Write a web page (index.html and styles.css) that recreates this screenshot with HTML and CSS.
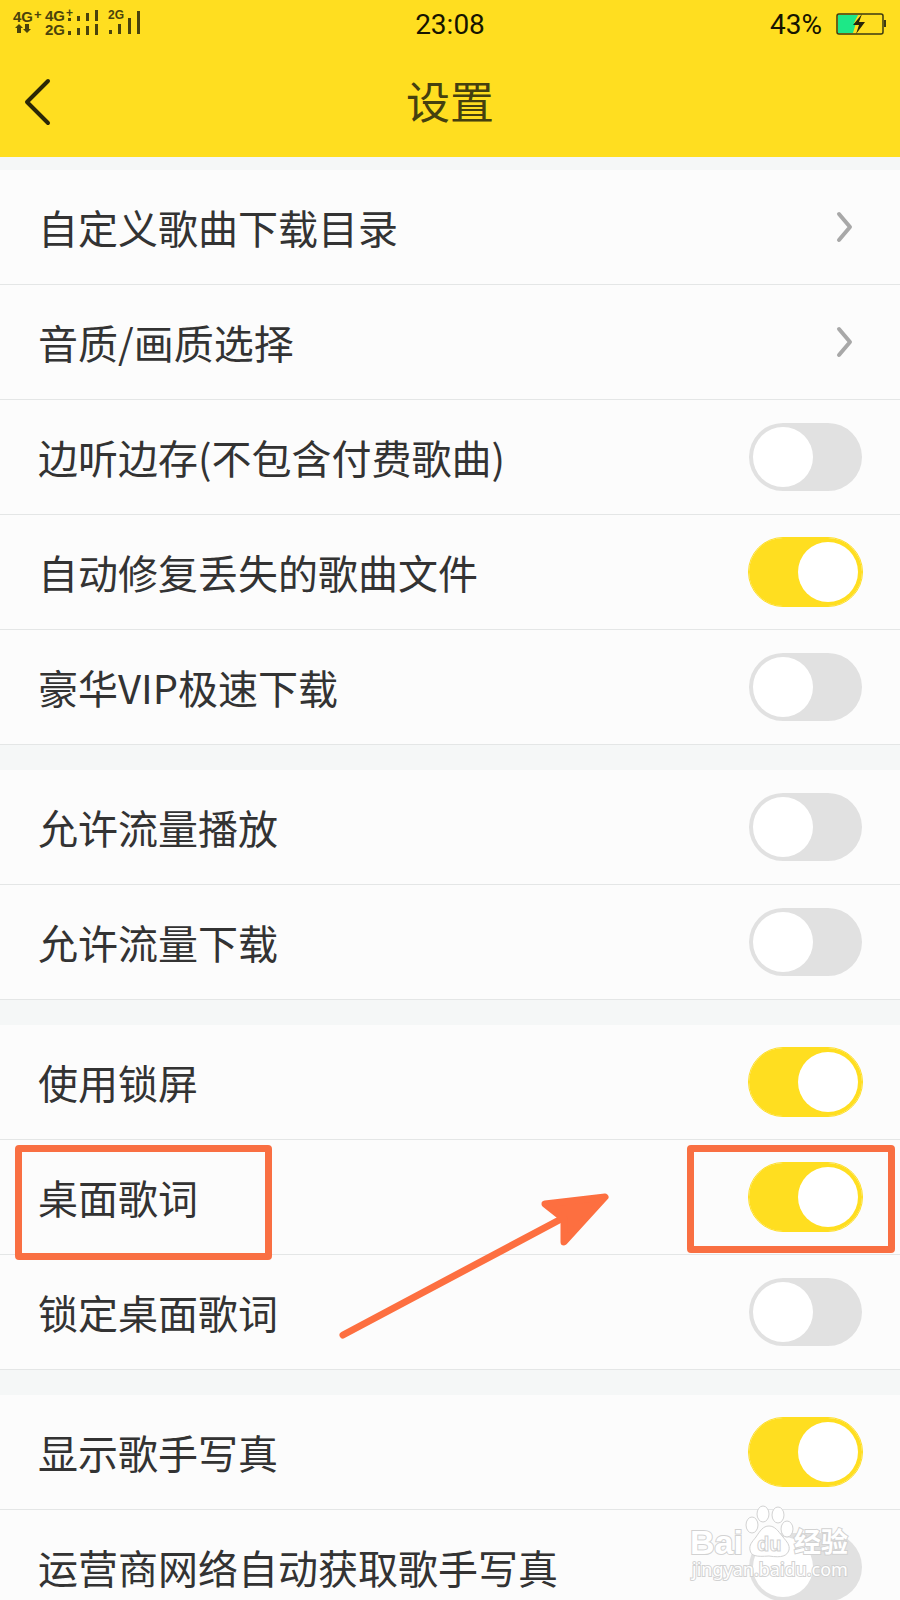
FILE: index.html
```
<!DOCTYPE html>
<html lang="zh-CN">
<head>
    <meta charset="UTF-8">
    <meta name="viewport" content="width=device-width, initial-scale=1.0">
    <title>设置</title>
    <link rel="stylesheet" href="styles.css">
</head>
<body>
    <div class="screen">
        <!-- 顶部：状态栏 + 标题栏 -->
        <header class="header">
            <div class="status-bar">
                <svg class="signal" viewBox="0 0 144 40" role="img" aria-label="信号">
                    <g class="signal-text">
                        <text x="13" y="22" font-size="15">4G</text>
                        <text x="34" y="19" font-size="13">+</text>
                        <text x="45" y="21" font-size="15">4G</text>
                        <text x="66" y="17" font-size="12">+</text>
                        <text x="45" y="35" font-size="15">2G</text>
                        <text x="108" y="19" font-size="12">2G</text>
                    </g>
                    <path d="M17 33v-5h-2l4-4 4 4h-2v5z M25 24v5h-2l4 4 4-4h-2v-5z"/>
                    <path d="M68 18h3v3h-3z M77 16h3v5h-3z M86 13h3v8h-3z M95 10h3v11h-3z"/>
                    <path d="M68 31h3v4h-3z M77 28h3v7h-3z M86 26h3v9h-3z M95 24h3v11h-3z"/>
                    <path d="M109 30h3v4h-3z M118 24h3v10h-3z M128 18h3v16h-3z M137 11h3v23h-3z"/>
                </svg>
                <span class="time">23:08</span>
                <div class="battery">
                    <span>43%</span>
                    <svg width="50" height="24" viewBox="0 0 50 24" aria-hidden="true">
                        <path d="M2 3h20l-4 8h2l-3 10H2z" fill="#1de887"/>
                        <rect x="1" y="2" width="46" height="20" rx="2" fill="none" stroke="#3d3a12" stroke-width="1.500"/>
                        <rect x="48" y="8" width="2" height="7" fill="#3d3a12"/>
                        <path d="M26 2L17 13h6l-3 9 9-12h-6z" fill="#28250a"/>
                    </svg>
                </div>
            </div>
            <div class="title-bar">
                <button class="back" type="button" aria-label="返回">
                    <svg width="30" height="50" viewBox="0 0 30 50" aria-hidden="true">
                        <path d="M24 4L3 25L24 46"/>
                    </svg>
                </button>
                <h1 class="title">设置</h1>
            </div>
        </header>

        <!-- 设置列表 -->
        <main class="list">
            <section class="group">
                <a class="row" href="#">
                    <span>自定义歌曲下载目录</span>
                    <svg class="arrow" width="20" height="32" viewBox="0 0 20 32" aria-hidden="true"><path d="M4 3L15 16L4 29"/></svg>
                </a>
                <a class="row" href="#">
                    <span>音质/画质选择</span>
                    <svg class="arrow" width="20" height="32" viewBox="0 0 20 32" aria-hidden="true"><path d="M4 3L15 16L4 29"/></svg>
                </a>
                <label class="row">
                    <span>边听边存(不包含付费歌曲)</span>
                    <input class="switch" type="checkbox">
                </label>
                <label class="row">
                    <span>自动修复丢失的歌曲文件</span>
                    <input class="switch" type="checkbox" checked>
                </label>
                <label class="row">
                    <span>豪华VIP极速下载</span>
                    <input class="switch" type="checkbox">
                </label>
            </section>

            <section class="group">
                <label class="row">
                    <span>允许流量播放</span>
                    <input class="switch" type="checkbox">
                </label>
                <label class="row">
                    <span>允许流量下载</span>
                    <input class="switch" type="checkbox">
                </label>
            </section>

            <section class="group">
                <label class="row">
                    <span>使用锁屏</span>
                    <input class="switch" type="checkbox" checked>
                </label>
                <!-- 重点标注的一行 -->
                <div class="marked">
                    <label class="row">
                        <span>桌面歌词</span>
                        <input class="switch" type="checkbox" checked>
                    </label>
                    <div class="mark mark-label"></div>
                    <div class="mark mark-switch"></div>
                    <svg class="pointer" width="280" height="155" viewBox="0 0 280 155" aria-hidden="true">
                        <path class="pointer-line" d="M8 145L228 28"/>
                        <path class="pointer-head" d="M270 7L210 14L229 29L229 52Z"/>
                    </svg>
                </div>
                <label class="row">
                    <span>锁定桌面歌词</span>
                    <input class="switch" type="checkbox">
                </label>
            </section>

            <section class="group">
                <label class="row">
                    <span>显示歌手写真</span>
                    <input class="switch" type="checkbox" checked>
                </label>
                <label class="row">
                    <span>运营商网络自动获取歌手写真</span>
                    <input class="switch" type="checkbox">
                </label>
            </section>
        </main>

        <!-- 水印 -->
        <svg class="watermark" width="174" height="84" viewBox="0 0 174 84" role="img" aria-label="Baidu经验 jingyan.baidu.com">
            <text class="wm-logo" x="8" y="52" font-size="34">Bai</text>
            <g class="wm-paw">
                <ellipse cx="70" cy="23" rx="6" ry="8"/>
                <ellipse cx="81" cy="12" rx="6" ry="8"/>
                <ellipse cx="96" cy="13" rx="6" ry="8"/>
                <ellipse cx="105" cy="27" rx="6" ry="8"/>
                <path d="M87 24c-6 0-9 5-13 11-4 5-7 8-6 13 1 6 6 7 19 6 13 2 18 0 20-6 1-5-2-8-6-13-5-6-8-11-14-11z"/>
            </g>
            <text class="wm-du" x="75" y="49" font-size="20">du</text>
            <text class="wm-cn" x="112" y="50" font-size="27">经验</text>
            <text class="wm-url" x="10" y="74" font-size="18">jingyan.baidu.com</text>
        </svg>
    </div>
</body>
</html>
```
FILE: styles.css
```
/* 全局重置 */
* {
    margin: 0;
    padding: 0;
    box-sizing: border-box;
}

body {
    font-family: "Noto Sans CJK SC", "Noto Sans", sans-serif;
    background: #f5f7f7;
    color: #333;
}

.screen {
    position: relative;
    display: flex;
    flex-direction: column;
    height: 100vh;
    overflow: hidden;
}

/* 顶部 */
.header {
    flex: none;
    background: #ffde20;
}

.status-bar {
    display: grid;
    grid-template-columns: 1fr auto 1fr;
    align-items: center;
    height: 48px;
    color: #161400;
    font-family: Roboto, "Noto Sans", sans-serif;
    font-size: 28px;
}

.signal {
    width: 144px;
    height: 40px;
    align-self: start;
    fill: #4a430c;
}

.signal-text {
    font-family: "Liberation Sans", sans-serif;
    font-weight: bold;
}

.battery {
    display: flex;
    align-items: center;
    justify-content: flex-end;
    gap: 14px;
    padding-right: 14px;
}

.title-bar {
    display: grid;
    grid-template-columns: 1fr auto 1fr;
    align-items: center;
    height: 109px;
    padding: 0 24px 2px;
}

.back {
    justify-self: start;
    display: flex;
    border: none;
    background: none;
    cursor: pointer;
}

.back path {
    fill: none;
    stroke: #2b2706;
    stroke-width: 4;
    stroke-linecap: round;
    stroke-linejoin: round;
}

.title {
    padding-bottom: 4px;
    font-size: 44px;
    font-weight: 400;
    line-height: 60px;
    color: #45400f;
}

/* 列表 */
.list {
    display: flex;
    flex-direction: column;
    gap: 25px;
    flex: 1;
    min-height: 0;
    padding-top: 13px;
    overflow-y: auto;
    scrollbar-width: none;
}

.group {
    flex: none;
    background: #fcfcfc;
}

.row {
    display: flex;
    align-items: center;
    justify-content: space-between;
    height: 115px;
    padding: 0 37px 0 38px;
    border-bottom: 1px solid #e4e6e6;
    color: #333;
    font-size: 40px;
    line-height: 60px;
    text-decoration: none;
}

.arrow {
    margin-right: 8px;
    fill: none;
    stroke: #a8a8a8;
    stroke-width: 4;
    stroke-linecap: round;
    stroke-linejoin: round;
}

/* 开关 */
.switch {
    appearance: none;
    display: flex;
    width: 115px;
    height: 70px;
    padding: 4px;
    border: 1px solid transparent;
    border-radius: 35px;
    background: #e1e1e1;
    background-clip: padding-box;
    cursor: pointer;
}

.switch::before {
    content: "";
    width: 60px;
    height: 60px;
    border-radius: 50%;
    background: #fff;
}

.switch:checked {
    justify-content: flex-end;
    border-color: #ffde20;
    background-color: #ffde20;
}

/* 标注框和箭头 */
.marked {
    position: relative;
}

.mark {
    position: absolute;
    top: 5px;
    border: 7px solid #f96f42;
    border-radius: 4px;
    pointer-events: none;
}

.mark-label {
    left: 15px;
    width: 257px;
    height: 115px;
}

.mark-switch {
    right: 5px;
    width: 208px;
    height: 108px;
}

.pointer {
    position: absolute;
    top: 50px;
    left: 335px;
    pointer-events: none;
    stroke: #fd6f40;
    stroke-width: 7;
    stroke-linecap: round;
    stroke-linejoin: round;
}

.pointer-line {
    fill: none;
}

.pointer-head {
    fill: #fd6f40;
}

/* 水印 */
.watermark {
    position: absolute;
    right: 44px;
    bottom: 14px;
    pointer-events: none;
    fill: #fff;
    stroke: #d2d2d2;
    stroke-width: 1;
}

.wm-logo,
.wm-du {
    font-family: "Liberation Sans", sans-serif;
    font-weight: bold;
}

.wm-logo,
.wm-cn {
    stroke-width: 2;
    paint-order: stroke;
}

.wm-cn {
    font-weight: bold;
}

.wm-url {
    font-family: "Noto Sans", sans-serif;
    paint-order: stroke;
    stroke-width: 2;
}
```
